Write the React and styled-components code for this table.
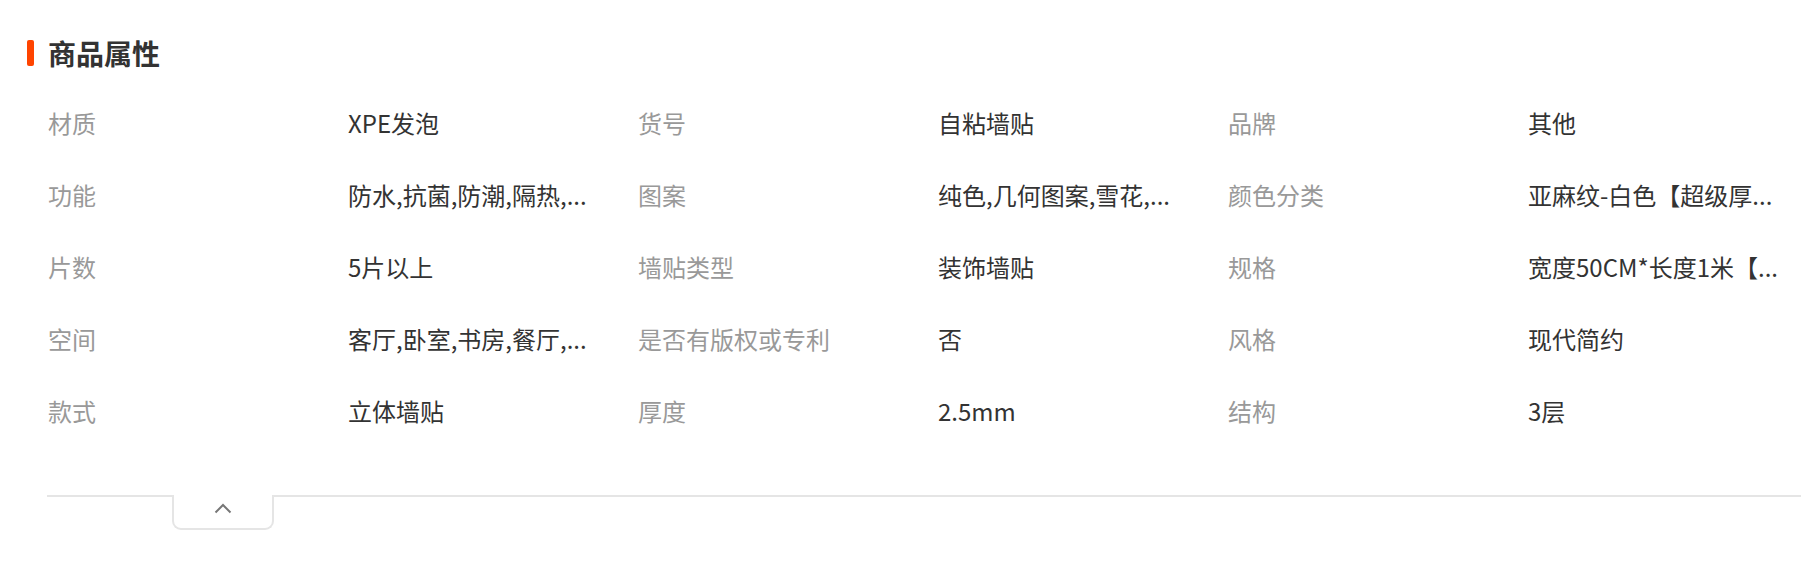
import styled, { createGlobalStyle } from 'styled-components'

const GlobalStyle = createGlobalStyle`
    html, body {
        margin: 0;
        padding: 0;
        background: #fff;
    }
    body {
        font-family: "Noto Sans CJK SC", "Noto Sans", sans-serif;
    }
`

const Section = styled.section`
    width: 1801px;
    padding-top: 33px;
`

const Title = styled.h2`
    display: flex;
    align-items: center;
    gap: 14px;
    margin: 0 0 13px 27px;
    height: 40px;

    font-size: 28px;
    font-weight: 700;
    color: #333;
    line-height: 40px;

    &::before {
        content: '';
        display: block;
        width: 7px;
        height: 26px;
        border-radius: 2px;
        background-color: #ff4400;
    }
`

const Grid = styled.div`
    display: grid;
    grid-template-columns: repeat(3, 300px 290px);
    grid-auto-rows: 72px;
    padding-left: 48px;
`

const Cell = styled.div`
    display: flex;
    align-items: center;
    font-size: 24px;
    color: ${({ $label }) => ($label ? '#999' : '#333')};
    white-space: nowrap;
`

const Footer = styled.div`
    display: flex;
    margin: 49px 0 0 47px;
    border-top: 2px solid #e5e5e5;
`

const Toggle = styled.button`
    width: 102px;
    height: 35px;
    margin: -2px 0 0 125px;
    padding: 0 0 6px;

    display: flex;
    align-items: center;
    justify-content: center;

    background: #fff;
    border: 2px solid #e5e5e5;
    border-top: none;
    border-radius: 0 0 9px 9px;
    cursor: pointer;
`

const attrs = [
    ['材质', 'XPE发泡', '货号', '自粘墙贴', '品牌', '其他'],
    ['功能', '防水,抗菌,防潮,隔热,...', '图案', '纯色,几何图案,雪花,...', '颜色分类', '亚麻纹-白色【超级厚...'],
    ['片数', '5片以上', '墙贴类型', '装饰墙贴', '规格', '宽度50CM*长度1米【...'],
    ['空间', '客厅,卧室,书房,餐厅,...', '是否有版权或专利', '否', '风格', '现代简约'],
    ['款式', '立体墙贴', '厚度', '2.5mm', '结构', '3层'],
]

const ChevronUp = () => (
    <svg width="18" height="11" viewBox="0 0 18 11" fill="none">
        <path d="M1.5 9.5 L9 2 L16.5 9.5" stroke="#777" strokeWidth="2" />
    </svg>
)

export default function App() {
    return (
        <>
            <GlobalStyle />
            <Section>
                <Title>商品属性</Title>
                <Grid>
                    {attrs.flatMap((row, r) =>
                        row.map((text, i) => (
                            <Cell key={`${r}-${i}`} $label={i % 2 === 0}>
                                {text}
                            </Cell>
                        ))
                    )}
                </Grid>
                <Footer>
                    <Toggle aria-label="收起">
                        <ChevronUp />
                    </Toggle>
                </Footer>
            </Section>
        </>
    )
}
